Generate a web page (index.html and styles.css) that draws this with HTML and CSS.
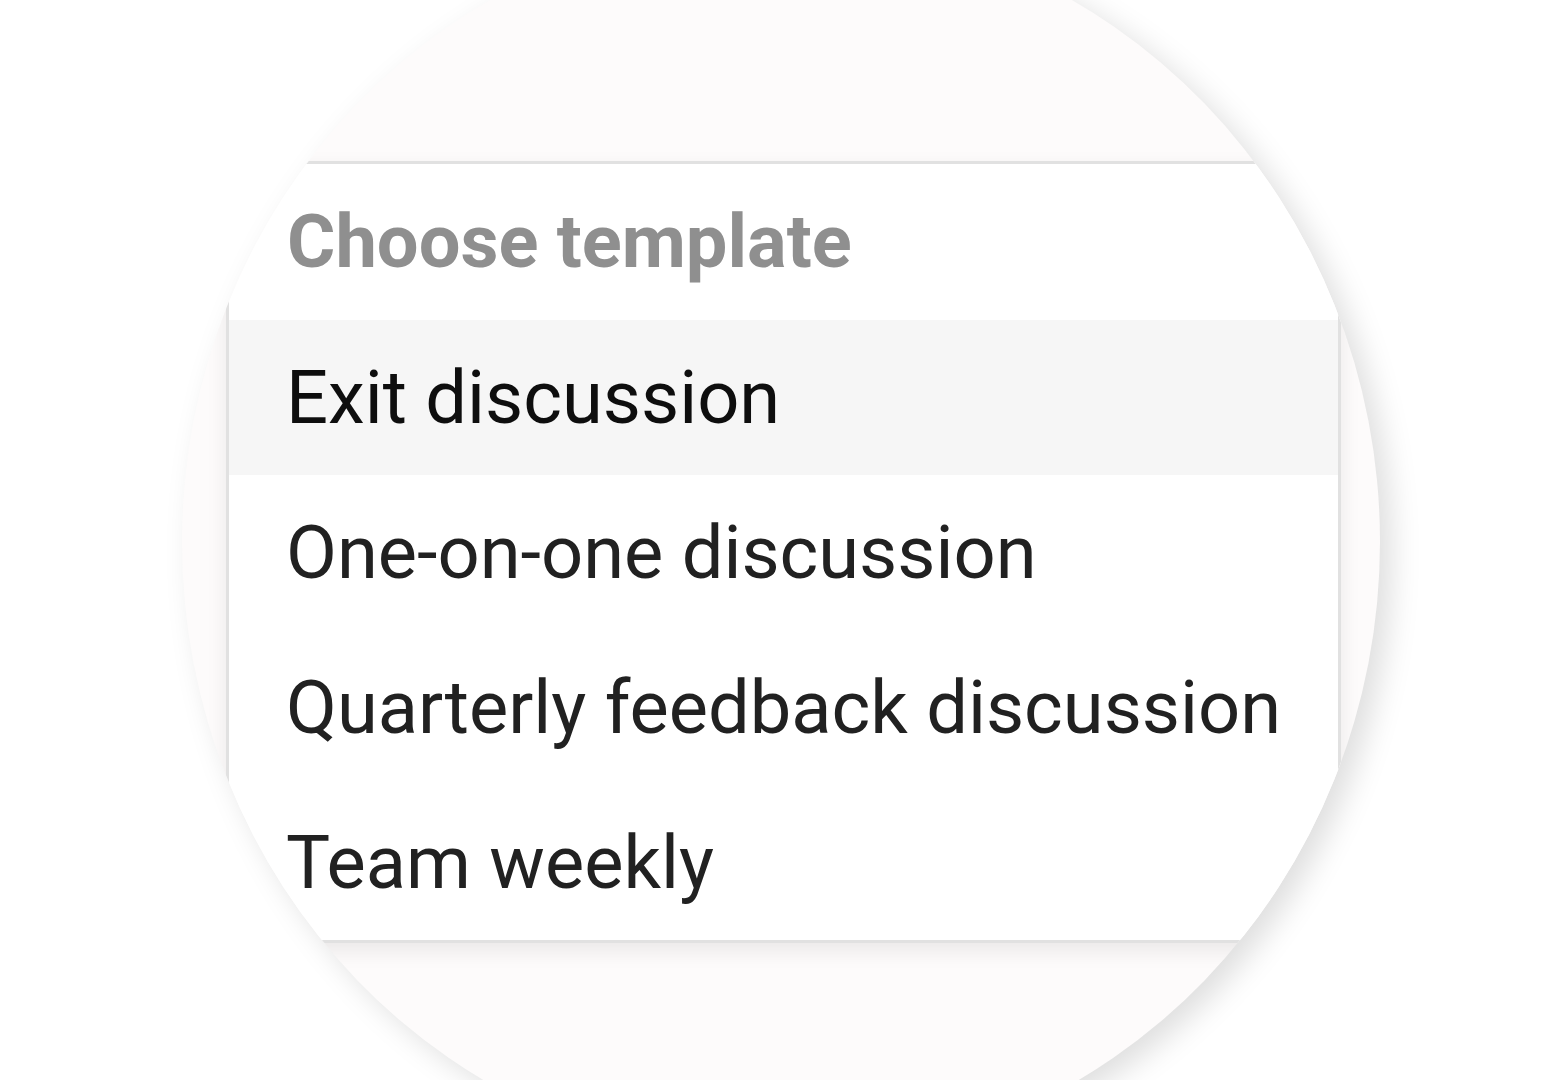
FILE: index.html
```html
<!DOCTYPE html>
<html lang="en">
<head>
<meta charset="utf-8">
<title>Choose template</title>
<link rel="stylesheet" href="styles.css">
</head>
<body>
  <div class="lens">
    <div class="menu">
      <div class="menu-title">Choose template</div>
      <ul class="menu-list">
        <li class="menu-item is-active">Exit discussion</li>
        <li class="menu-item">One-on-one discussion</li>
        <li class="menu-item">Quarterly feedback discussion</li>
        <li class="menu-item">Team weekly</li>
      </ul>
    </div>
  </div>
</body>
</html>
```

FILE: styles.css
```css
html, body {
  margin: 0;
  padding: 0;
  background: #ffffff;
  width: 1560px;
  height: 1080px;
  overflow: hidden;
}

body {
  font-family: Roboto, "Liberation Sans", Arial, sans-serif;
}

.lens {
  width: 1198px;
  height: 1240px;
  margin-left: 182px;
  margin-top: -78px;
  border-radius: 50%;
  overflow: hidden;
  background: #fdfbfb;
  box-shadow: 12px 10px 30px rgba(0, 0, 0, 0.13);
  padding-top: 239px;
  box-sizing: border-box;
}

.menu {
  margin-left: 44px;
  width: 1115px;
  box-sizing: border-box;
  background: #ffffff;
  border: 3px solid #e1e1e1;
  box-shadow: 0 8px 20px rgba(0, 0, 0, 0.08);
}

.menu-title {
  height: 156px;
  line-height: 156px;
  padding-left: 58px;
  font-size: 74px;
  font-weight: 700;
  color: #8f8f8f;
  white-space: nowrap;
}

.menu-list {
  list-style: none;
  margin: 0;
  padding: 0;
}

.menu-item {
  height: 155px;
  line-height: 155px;
  padding-left: 57px;
  font-size: 74px;
  font-weight: 400;
  color: #212121;
  white-space: nowrap;
}

.menu-item.is-active {
  background: #f6f6f6;
  color: #0e0e0e;
}
```
